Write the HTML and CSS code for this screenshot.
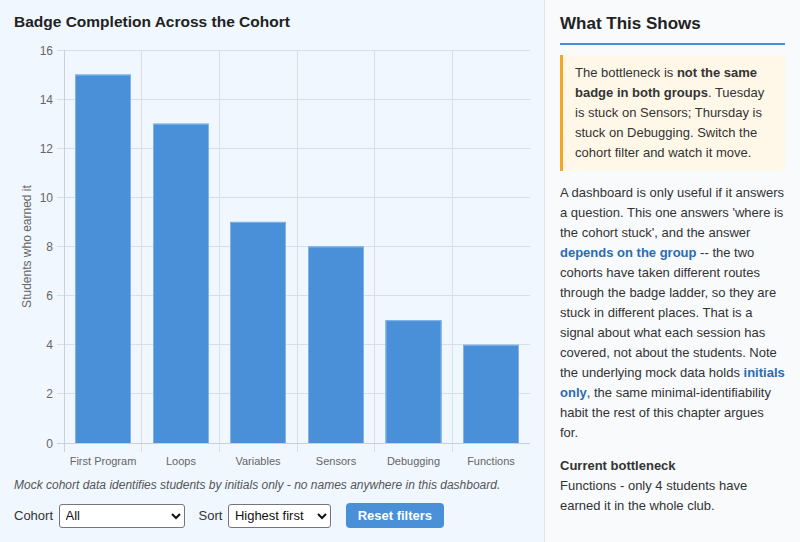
FILE: index.html
```html
<!DOCTYPE html>
<html lang="en">
<head>
<meta charset="utf-8">
<title>Badge Completion</title>
<link rel="stylesheet" href="styles.css">
</head>
<body>
<div class="layout">
  <main class="main">
    <h2 class="title">Badge Completion Across the Cohort</h2>
    <svg class="chart" width="520" height="438" viewBox="14 36 520 438" xmlns="http://www.w3.org/2000/svg">
      <g class="grid" stroke="#d9dfe7" stroke-width="1" shape-rendering="crispEdges">
        <line x1="57" y1="50.5" x2="530" y2="50.5"/>
        <line x1="57" y1="99.5" x2="530" y2="99.5"/>
        <line x1="57" y1="148.5" x2="530" y2="148.5"/>
        <line x1="57" y1="197.5" x2="530" y2="197.5"/>
        <line x1="57" y1="246.5" x2="530" y2="246.5"/>
        <line x1="57" y1="295.5" x2="530" y2="295.5"/>
        <line x1="57" y1="344.5" x2="530" y2="344.5"/>
        <line x1="57" y1="393.5" x2="530" y2="393.5"/>
        <line x1="141.5" y1="50" x2="141.5" y2="452"/>
        <line x1="219.5" y1="50" x2="219.5" y2="452"/>
        <line x1="297.5" y1="50" x2="297.5" y2="452"/>
        <line x1="374.5" y1="50" x2="374.5" y2="452"/>
        <line x1="452.5" y1="50" x2="452.5" y2="452"/>
      </g>
      <g stroke="#c9d0d9" stroke-width="1" shape-rendering="crispEdges">
        <line x1="64.5" y1="50" x2="64.5" y2="452"/>
        <line x1="57" y1="443.5" x2="530" y2="443.5"/>
      </g>
      <g class="bars">
        <rect x="75" y="74.6" width="56" height="368.4" fill="#4a90d9"/>
        <path d="M75.5 443 V75.1 H130.5 V443" fill="none" stroke="#82b3e8" stroke-width="1"/>
        <rect x="153" y="123.7" width="56" height="319.3" fill="#4a90d9"/>
        <path d="M153.5 443 V124.2 H208.5 V443" fill="none" stroke="#82b3e8" stroke-width="1"/>
        <rect x="230" y="221.9" width="56" height="221.1" fill="#4a90d9"/>
        <path d="M230.5 443 V222.4 H285.5 V443" fill="none" stroke="#82b3e8" stroke-width="1"/>
        <rect x="308" y="246.5" width="56" height="196.5" fill="#4a90d9"/>
        <path d="M308.5 443 V247 H363.5 V443" fill="none" stroke="#82b3e8" stroke-width="1"/>
        <rect x="385.5" y="320.2" width="56" height="122.8" fill="#4a90d9"/>
        <path d="M386 443 V320.7 H441 V443" fill="none" stroke="#82b3e8" stroke-width="1"/>
        <rect x="463" y="344.8" width="56" height="98.2" fill="#4a90d9"/>
        <path d="M463.5 443 V345.3 H518.5 V443" fill="none" stroke="#82b3e8" stroke-width="1"/>
      </g>
      <g class="yticks" text-anchor="end">
        <text x="53" y="54.5">16</text>
        <text x="53" y="103.5">14</text>
        <text x="53" y="152.5">12</text>
        <text x="53" y="201.5">10</text>
        <text x="53" y="250.5">8</text>
        <text x="53" y="299.5">6</text>
        <text x="53" y="348.5">4</text>
        <text x="53" y="397.5">2</text>
        <text x="53" y="447.5">0</text>
      </g>
      <g class="xticks" text-anchor="middle">
        <text x="103" y="465">First Program</text>
        <text x="181" y="465">Loops</text>
        <text x="258" y="465">Variables</text>
        <text x="336" y="465">Sensors</text>
        <text x="413.5" y="465">Debugging</text>
        <text x="491" y="465">Functions</text>
      </g>
      <text class="ytitle" text-anchor="middle" transform="translate(30.5 246.5) rotate(-90)">Students who earned it</text>
    </svg>
    <p class="caption">Mock cohort data identifies students by initials only - no names anywhere in this dashboard.</p>
    <div class="controls">
      <label class="ctl-label" for="cohort">Cohort</label>
      <select id="cohort" class="sel sel-cohort">
        <option>All</option>
        <option>Tuesday</option>
        <option>Thursday</option>
      </select>
      <label class="ctl-label ctl-sort" for="sort">Sort</label>
      <select id="sort" class="sel sel-sort">
        <option>Highest first</option>
        <option>Ladder order</option>
      </select>
      <button class="reset" type="button">Reset filters</button>
    </div>
  </main>
  <aside class="side">
    <h3 class="side-title">What This Shows</h3>
    <div class="callout">The bottleneck is <strong>not the same badge in both groups</strong>. Tuesday is stuck on Sensors; Thursday is stuck on Debugging. Switch the cohort filter and watch it move.</div>
    <p class="side-text">A dashboard is only useful if it answers a question. This one answers 'where is the cohort stuck', and the answer <a class="hl">depends on the group</a> -- the two cohorts have taken different routes through the badge ladder, so they are stuck in different places. That is a signal about what each session has covered, not about the students. Note the underlying mock data holds <a class="hl">initials only</a>, the same minimal-identifiability habit the rest of this chapter argues for.</p>
    <div class="bottleneck">
      <div class="bn-label">Current bottleneck</div>
      <div class="bn-text">Functions - only 4 students have earned it in the whole club.</div>
    </div>
  </aside>
</div>
</body>
</html>
```
FILE: styles.css
```css
html, body {
  margin: 0;
  padding: 0;
  height: 100%;
}
body {
  font-family: "Liberation Sans", Arial, sans-serif;
  color: #333;
  background: #f0f7ff;
}
.layout {
  display: flex;
  height: 542px;
  overflow: hidden;
}
.main {
  width: 544px;
  box-sizing: border-box;
  padding: 12px 14px 0 14px;
  background: #f0f7ff;
}
.title {
  margin: 0;
  font-size: 15.5px;
  line-height: 19px;
  font-weight: bold;
  color: #222;
}
.chart {
  display: block;
  margin-top: 5px;
  overflow: visible;
}
.yticks text {
  font-family: "Liberation Sans", Arial, sans-serif;
  font-size: 12px;
  fill: #666;
}
.xticks text {
  font-family: "Liberation Sans", Arial, sans-serif;
  font-size: 11px;
  fill: #666;
}
.ytitle {
  font-family: "Liberation Sans", Arial, sans-serif;
  font-size: 12px;
  fill: #666;
}
.caption {
  margin: 4px 0 0 0;
  font-size: 12px;
  line-height: 14px;
  font-style: italic;
  color: #555;
}
.controls {
  display: flex;
  align-items: center;
  margin-top: 11px;
  height: 25px;
  font-size: 13px;
}
.ctl-label {
  color: #333;
  margin-right: 5.5px;
}
.ctl-sort {
  margin-left: 14px;
}
.sel {
  font-family: "Liberation Sans", Arial, sans-serif;
  font-size: 13px;
  height: 24px;
  box-sizing: border-box;
  border: 1px solid #767676;
  border-radius: 3px;
  background: #fff;
  color: #111;
  padding: 0 2px;
}
.sel-cohort {
  width: 126px;
}
.sel-sort {
  width: 103px;
}
.reset {
  margin-left: 15px;
  width: 98px;
  height: 25px;
  border: none;
  border-radius: 4px;
  background: #4a90d9;
  color: #fff;
  font-family: "Liberation Sans", Arial, sans-serif;
  font-size: 13px;
  font-weight: bold;
  padding: 0;
}
.side {
  width: 256px;
  box-sizing: border-box;
  border-left: 1px solid #dfe5ec;
  background: #f8fafc;
  padding: 14px 15px 0 15px;
  font-size: 13px;
  line-height: 20px;
  color: #333;
}
.side-title {
  margin: 0 0 10px 0;
  font-size: 17px;
  line-height: 19px;
  font-weight: bold;
  color: #222;
  padding-bottom: 10px;
  border-bottom: 2px solid #4a90d9;
}
.callout {
  background: #fff7e8;
  border-left: 3px solid #f5a623;
  padding: 8px 10px 8px 12px;
}
.callout strong {
  font-weight: bold;
}
.side-text {
  margin: 12px 0 0 0;
}
.hl {
  color: #2b6cb0;
  font-weight: bold;
  text-decoration: none;
}
.bottleneck {
  margin-top: 13px;
}
.bn-label {
  font-weight: bold;
}
```
